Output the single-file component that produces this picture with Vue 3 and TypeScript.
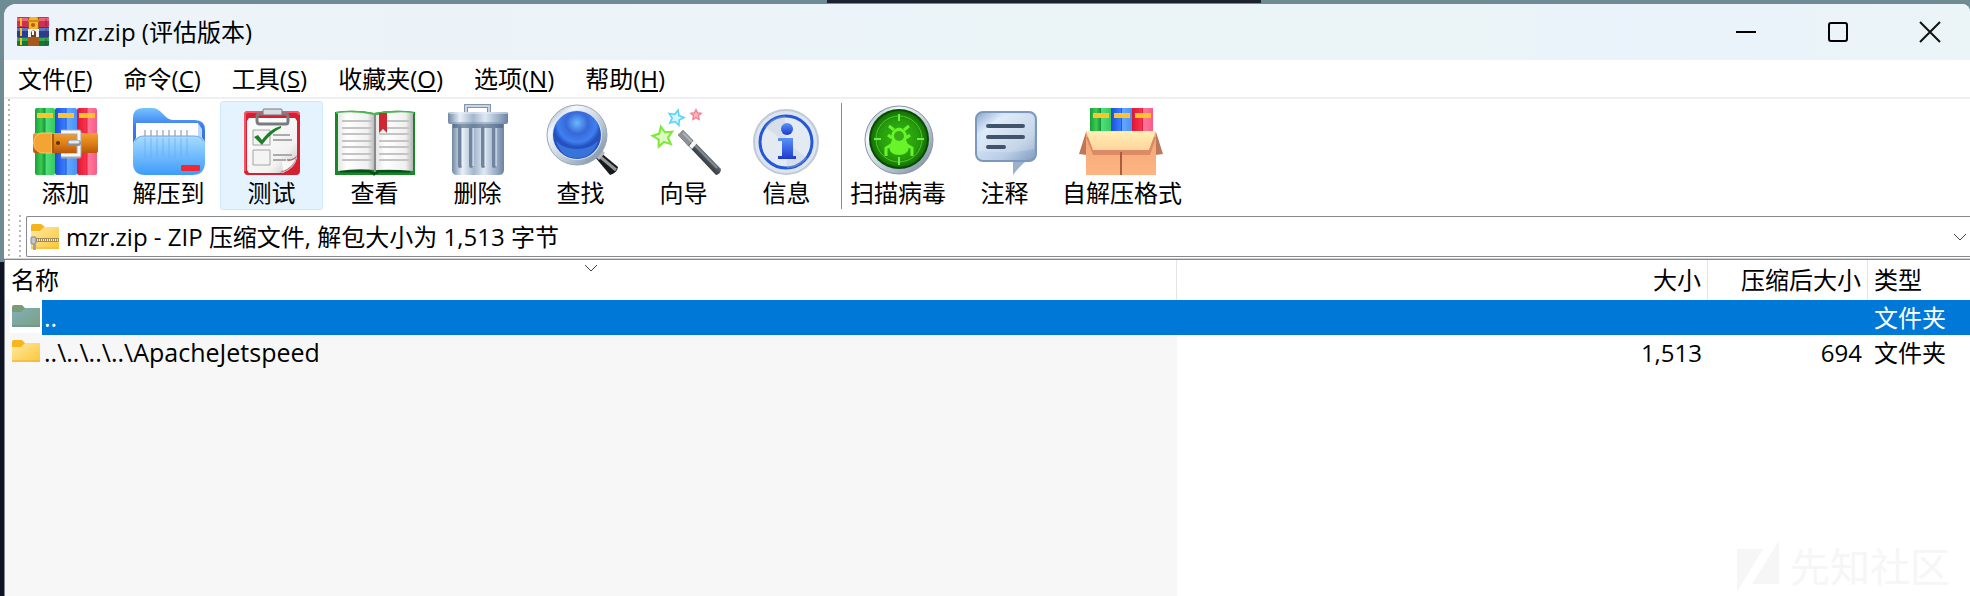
<script setup lang="ts">
import { ref } from 'vue'

interface MenuEntry { label: string; key: string }
interface Tool { id: string; label: string; group: 'main' | 'extra' }
interface Entry { name: string; size: string; packed: string; type: string }

const menus: MenuEntry[] = [
  { label: '文件', key: 'F' },
  { label: '命令', key: 'C' },
  { label: '工具', key: 'S' },
  { label: '收藏夹', key: 'O' },
  { label: '选项', key: 'N' },
  { label: '帮助', key: 'H' },
]

const tools: Tool[] = [
  { id: 'add', label: '添加', group: 'main' },
  { id: 'extract', label: '解压到', group: 'main' },
  { id: 'test', label: '测试', group: 'main' },
  { id: 'view', label: '查看', group: 'main' },
  { id: 'delete', label: '删除', group: 'main' },
  { id: 'find', label: '查找', group: 'main' },
  { id: 'wizard', label: '向导', group: 'main' },
  { id: 'info', label: '信息', group: 'main' },
  { id: 'scan', label: '扫描病毒', group: 'extra' },
  { id: 'comment', label: '注释', group: 'extra' },
  { id: 'sfx', label: '自解压格式', group: 'extra' },
]

const entries: Entry[] = [
  { name: '..', size: '', packed: '', type: '文件夹' },
  { name: '..\\..\\..\\..\\ApacheJetspeed', size: '1,513', packed: '694', type: '文件夹' },
]

const hovered = ref('test')
const selected = ref(0)

function star(cx: number, cy: number, r: number, turn: number): string {
  return Array.from({ length: 10 }, (_, i) => {
    const a = ((i * 36 + turn - 90) * Math.PI) / 180
    const d = i % 2 ? r * 0.48 : r
    return `${(cx + d * Math.cos(a)).toFixed(1)},${(cy + d * Math.sin(a)).toFixed(1)}`
  }).join(' ')
}
</script>

<template>
  <div class="desktop" lang="zh-CN">
    <div class="backdrop-top"></div>
    <svg class="defs" aria-hidden="true">
      <defs>
        <linearGradient id="gGreen"><stop offset="0" stop-color="#18a038" /><stop offset=".3" stop-color="#3ccb52" /><stop offset=".5" stop-color="#17963a" /><stop offset=".55" stop-color="#4fe07a" /><stop offset="1" stop-color="#38c860" /></linearGradient>
        <linearGradient id="gBlue"><stop offset="0" stop-color="#1a50d8" /><stop offset=".45" stop-color="#3a7cff" /><stop offset=".5" stop-color="#2058e0" /><stop offset=".55" stop-color="#62a8ff" /><stop offset="1" stop-color="#4a90f8" /></linearGradient>
        <linearGradient id="gRed"><stop offset="0" stop-color="#d81838" /><stop offset=".45" stop-color="#ff3048" /><stop offset=".5" stop-color="#e02040" /><stop offset=".55" stop-color="#ff7aa0" /><stop offset="1" stop-color="#f85c84" /></linearGradient>
        <linearGradient id="gBelt" x2="0" y2="1"><stop offset="0" stop-color="#f0a030" /><stop offset=".5" stop-color="#e08018" /><stop offset="1" stop-color="#b85808" /></linearGradient>
        <linearGradient id="gFolder" x2="0" y2="1"><stop offset="0" stop-color="#a8dcff" /><stop offset="1" stop-color="#3c9cfa" /></linearGradient>
        <linearGradient id="gBack" x2="0" y2="1"><stop offset="0" stop-color="#74c4ff" /><stop offset=".35" stop-color="#3b7cf0" /><stop offset="1" stop-color="#2c62e0" /></linearGradient>
        <linearGradient id="gPaper" x2="1" y2="1"><stop offset="0" stop-color="#fff" /><stop offset=".7" stop-color="#f2f2f2" /><stop offset="1" stop-color="#bcbcbc" /></linearGradient>
        <linearGradient id="gPageL"><stop offset="0" stop-color="#e6e6e6" /><stop offset=".25" stop-color="#fff" /><stop offset=".8" stop-color="#f0f0f0" /><stop offset="1" stop-color="#b4b4b4" /></linearGradient>
        <linearGradient id="gSteel"><stop offset="0" stop-color="#7088a4" /><stop offset=".2" stop-color="#e8f0f8" /><stop offset=".42" stop-color="#a4b6cc" /><stop offset=".62" stop-color="#dce8f4" /><stop offset="1" stop-color="#6c84a4" /></linearGradient>
        <linearGradient id="gRim" x2="1" y2="1"><stop offset="0" stop-color="#8094a8" /><stop offset=".25" stop-color="#f6faff" /><stop offset=".6" stop-color="#bcc8d6" /><stop offset="1" stop-color="#70849c" /></linearGradient>
        <radialGradient id="gLens" cy=".25"><stop offset="0" stop-color="#68b8ff" /><stop offset=".45" stop-color="#3868d8" /><stop offset=".8" stop-color="#3f80f0" /><stop offset="1" stop-color="#2450c0" /></radialGradient>
        <linearGradient id="gWand" x1="1" y2="1" x2="0"><stop offset=".35" stop-color="#7c8890" /><stop offset=".65" stop-color="#141a20" /></linearGradient>
        <linearGradient id="gInfo" x2="0" y2="1"><stop offset="0" stop-color="#5a94f8" /><stop offset="1" stop-color="#1c38d0" /></linearGradient>
        <radialGradient id="gRadar"><stop offset="0" stop-color="#36b818" /><stop offset=".7" stop-color="#279c0c" /><stop offset="1" stop-color="#147004" /></radialGradient>
        <linearGradient id="gBubble" x2="1" y2="1"><stop offset="0" stop-color="#88a4cc" /><stop offset=".25" stop-color="#d8e8f8" /><stop offset=".7" stop-color="#b8cce4" /><stop offset="1" stop-color="#7e9abc" /></linearGradient>
        <linearGradient id="gCard" x2="0" y2="1"><stop offset="0" stop-color="#f0a474" /><stop offset="1" stop-color="#ffb484" /></linearGradient>
        <linearGradient id="gFlap" x2="0" y2="1"><stop offset="0" stop-color="#fff0b4" /><stop offset="1" stop-color="#ffd49c" /></linearGradient>
        <linearGradient id="gYellow" x2="1" y2="1"><stop offset="0" stop-color="#ffe8a4" /><stop offset="1" stop-color="#fcc736" /></linearGradient>
        <linearGradient id="gTeal" x2="1" y2="1"><stop offset="0" stop-color="#80b0b8" /><stop offset="1" stop-color="#7ca084" /></linearGradient>
      </defs>
    </svg>

    <main class="window">
      <header class="titlebar">
        <svg class="app-icon" viewBox="0 0 32 30" aria-hidden="true">
          <rect width="32" height="10" rx="1" fill="#d03050" /><rect y="1" width="32" height="3" fill="#ee6480" />
          <rect y="10" width="32" height="10" fill="#283c90" /><rect y="11" width="32" height="3" fill="#5878c8" />
          <rect y="20" width="32" height="9" rx="1" fill="#107838" /><rect y="21" width="32" height="3" fill="#38a850" />
          <path d="M4 1v8M4 11v8M4 21v7" stroke="#f8c020" stroke-width="2" />
          <path d="M29 2v7M29 12v7M29 22v6" stroke="#702840" stroke-opacity=".4" stroke-width="2" />
          <rect x="11" width="11" height="29" fill="#a85818" /><rect x="12" width="9" height="13" rx="2" fill="#f4b434" />
          <rect x="11" y="3" width="11" height="2" fill="#d88818" /><circle cx="16" cy="8" r="2" fill="#b06010" />
          <path d="M11 12h11v8H11z" fill="#eee" /><path d="M14 20v-4a2 2 0 0 1 5 0v4z" fill="#704020" /><path d="M16 14v4" stroke="#fff" stroke-width="2" />
        </svg>
        <h1 class="title">mzr.zip (评估版本)</h1>
        <div class="caption-buttons">
          <button type="button" class="caption" aria-label="最小化"><svg viewBox="0 0 20 20"><path d="M0 10h20" stroke="#000" stroke-width="2" /></svg></button>
          <button type="button" class="caption" aria-label="最大化"><svg viewBox="0 0 20 20"><rect x="1" y="1" width="18" height="18" rx="2" fill="none" stroke="#000" stroke-width="2" /></svg></button>
          <button type="button" class="caption" aria-label="关闭"><svg viewBox="0 0 20 20"><path d="M0 0l20 20M20 0L0 20" stroke="#111" stroke-width="2" /></svg></button>
        </div>
      </header>

      <nav class="menubar">
        <button v-for="m in menus" :key="m.key" type="button" class="menu">{{ m.label }}(<span class="mnemonic">{{ m.key }}</span>)</button>
      </nav>

      <div class="rebar">
        <div class="grip"></div>
        <div class="bands">
          <div class="toolbar" role="toolbar">
            <button v-for="t in tools" :key="t.id" type="button" class="tool" :class="[t.group, t.id, { hot: hovered === t.id }]" @mouseenter="hovered = t.id">
              <svg class="tool-icon" viewBox="0 0 80 72" aria-hidden="true">
                <g v-if="t.id === 'add'">
                  <rect x="9" y="4" width="20" height="67" rx="2" fill="url(#gGreen)" /><rect x="29" y="4" width="22" height="67" rx="2" fill="url(#gBlue)" /><rect x="51" y="4" width="20" height="67" rx="2" fill="url(#gRed)" />
                  <path d="M11 9h16v5H11zM32 9h16v5H32zM53 9h16v5H53z" fill="#ffc42c" />
                  <rect x="7" y="29" width="65" height="20" rx="2" fill="url(#gBelt)" />
                  <path d="M26 29H16c-11 2-11 18 0 20h10z" fill="#f4a432" stroke="#ffc864" /><path d="M27 30v19" stroke="#a85c10" stroke-width="2" />
                  <circle cx="32" cy="39" r="2" fill="#5c3008" />
                  <path d="M35 28h18v24H35" fill="none" stroke="#a4a8ae" stroke-width="5" stroke-linejoin="round" /><path d="M35 28h18v23H35" fill="none" stroke="#f6f6f8" stroke-width="3" stroke-linejoin="round" />
                  <path d="M44 39h8" stroke="#8a9098" stroke-width="6" stroke-linecap="round" /><path d="M44 38h8" stroke="#e6e9ec" stroke-width="3" stroke-linecap="round" />
                </g>
                <g v-else-if="t.id === 'extract'">
                  <path d="M4 14Q4 4 14 4h10c8 0 12 12 20 12h22q10 0 10 10v30H4z" fill="url(#gBack)" />
                  <path d="M7 19h62l4 6v20H7z" fill="#c4d4f4" /><path d="M7 19h62v24H7z" fill="#fdfdff" />
                  <path d="M4 42q0-10 10-10h52q10 0 10 8v18q0 13-13 13H16Q4 71 4 59z" fill="url(#gFolder)" />
                  <path d="M16 26v7M22 26v7M28 26v7M34 26v7M40 26v7M46 26v7M52 26v7M58 26v7" stroke="#bcc4d0" stroke-width="2" />
                  <path d="M16 34v20M22 34v20M28 34v20M34 34v20M40 34v20M46 34v20M52 34v20M58 34v20" stroke="#64acf4" stroke-opacity=".35" stroke-width="2" />
                  <path d="M6 37q3-5 9-5h50q7 0 9 5" fill="none" stroke="#6ca8ee" /><rect x="52" y="61" width="19" height="6" rx="1" fill="#f02832" />
                </g>
                <g v-else-if="t.id === 'test'">
                  <rect x="12" y="7" width="56" height="64" rx="4" fill="#d81f32" /><path d="M13 67V11q0-3 3-3h48q3 0 3 3" fill="none" stroke="#f65464" stroke-width="2" />
                  <path d="M17 14h46l2 3v37q-2 10-14 15H17l-2-3V17z" fill="url(#gPaper)" /><path d="M65 51q-3 15-18 18c9-6 10-8 8-14q7 1 10-4" fill="#8c1820" fill-opacity=".55" /><path d="M51 67q-1-8-1-10 10 1 14-3-3 9-13 13" fill="#f8f8f8" />
                  <path d="M32 10h-5q-2 0-2 3v4q0 3 3 3h26q2 0 2-3v-4q0-3-2-3h-5" fill="none" stroke="#787c80" stroke-width="3" /><rect x="31" y="5" width="19" height="6" rx="1" fill="#d8dcdf" stroke="#74787c" />
                  <path d="M21 26h17v15H21zM21 46h17v15H21z" fill="#f4f4f4" stroke="#a4a4a4" /><path d="M41 31h17M41 36h19M41 51h19M41 56h13" stroke="#aaa" stroke-width="2" />
                  <path d="M22 33l4-2 4 5c5-7 11-12 19-14v2c-8 4-14 10-19 17z" fill="#1d8028" />
                </g>
                <g v-else-if="t.id === 'view'">
                  <path d="M0 8q20-3 39 1 21-4 41-1v63H42l-3-1-3 1H0z" fill="#168828" /><path d="M1 9q20-3 38 1 20-4 40-1" fill="none" stroke="#48b850" stroke-width="2" /><path d="M5 67h29l5 3 5-3h31" fill="none" stroke="#07501a" stroke-width="3" />
                  <path d="M3 9q19-2 37 2v55q-18-2-37 1z" fill="url(#gPageL)" /><path d="M41 11q18-4 37-2v58q-19-2-37-1z" fill="url(#gPageL)" /><path d="M40 11v57" stroke="#888" stroke-width="2" />
                  <path d="M7 17h30M7 24h30M7 30h30M7 37h30M7 43h30M7 50h30M7 56h30M44 17h30M44 24h30M44 30h30M44 37h30M44 43h30M44 50h30M44 56h30" stroke="#c4c4c4" stroke-width="2" />
                  <path d="M44 9h8v20l-4-4-4 4z" fill="#d02830" />
                </g>
                <g v-else-if="t.id === 'delete'">
                  <path d="M28 9V2h23v7" fill="none" stroke="#8294aa" stroke-width="4" /><path d="M28 9V2h23v7" fill="none" stroke="#c8d4e2" stroke-width="2" />
                  <path d="M14 20h52v46q0 5-5 5H19q-5 0-5-5z" fill="url(#gSteel)" /><path d="M15 20h50v4H15z" fill="#475e7c" fill-opacity=".6" />
                  <path d="M22 24v38M33 24v38M45 24v38M56 24v38" stroke="#7084a0" stroke-width="4" stroke-linecap="round" /><path d="M24 24v38M35 24v38M47 24v38M58 24v38" stroke="#f0f6fc" stroke-width="1" />
                  <rect x="10" y="8" width="60" height="12" rx="2" fill="url(#gSteel)" /><path d="M11 9h58" stroke="#e8f0f8" /><path d="M11 19h58" stroke="#7890ac" />
                </g>
                <g v-else-if="t.id === 'find'">
                  <path d="M54 53l5-5 18 15q-1 6-8 8z" fill="#18191b" /><path d="M57 51l18 15" stroke="#94989c" stroke-width="3" /><path d="M52 50l6-7 6 6-6 7z" fill="#b4b8bd" />
                  <circle cx="36" cy="31" r="30" fill="url(#gRim)" stroke="#98a6b6" /><circle cx="36" cy="31" r="25" fill="#dce6f0" /><circle cx="36" cy="31" r="24" fill="url(#gLens)" /><path d="M15 37q5 17 21 17t21-17q-8 8-21 8t-21-8" fill="#58a8ff" fill-opacity=".4" />
                </g>
                <g v-else-if="t.id === 'wizard'">
                  <polygon :points="star(19, 33, 13, -12)" fill="#80e83c" /><polygon :points="star(19, 33, 8, -12)" fill="#dcfac4" />
                  <polygon :points="star(32, 14, 10, 15)" fill="#5cd4f8" /><polygon :points="star(32, 14, 6, 15)" fill="#d4f4ff" />
                  <polygon :points="star(52, 11, 7, 0)" fill="#f48090" /><polygon :points="star(52, 11, 4, 0)" fill="#f8b4bc" />
                  <path d="M34 31l5-5 38 39q0 5-5 6z" fill="url(#gWand)" /><path d="M34 31l5-5 10 10-5 6z" fill="#8c9196" /><path d="M45 42l5-6 3 3-5 6z" fill="#f4f4f4" /><path d="M39 29l34 35" stroke="#fff" stroke-opacity=".3" stroke-width="2" />
                </g>
                <g v-else-if="t.id === 'info'">
                  <circle cx="39" cy="38" r="32" fill="#dce4ee" stroke="#c0cad6" stroke-width="2" /><circle cx="39" cy="38" r="26" fill="#e4eaf2" stroke="#2458d8" stroke-width="3" /><path d="M39 38L18 23q8-11 20-11zM39 38l21 16q-8 10-20 10z" fill="#bccad8" fill-opacity=".35" />
                  <circle cx="40" cy="25" r="6" fill="url(#gInfo)" /><path d="M31 34h15v18h3v3H31v-3h4V37h-4z" fill="url(#gInfo)" />
                </g>
                <g v-else-if="t.id === 'scan'">
                  <circle cx="41" cy="36" r="34" fill="url(#gRim)" stroke="#8894a2" /><circle cx="41" cy="35" r="30" fill="#084c04" /><circle cx="41" cy="35" r="28" fill="url(#gRadar)" /><circle cx="41" cy="35" r="23" fill="none" stroke="#4cc82c" />
                  <path d="M41 10v7M41 53v8M16 35h7M59 35h7" stroke="#70ec48" stroke-width="2" />
                  <path d="M35 27q6-7 12 0 3 4 1 9l3 7q-1 8-10 8t-10-8l3-7q-2-5 1-9" fill="#68f428" /><path d="M36 26l-5-4M46 26l5-4M34 34l-4-3M48 34l4-3M33 41l-5 3v8M49 41l5 3v8" fill="none" stroke="#68f428" stroke-width="3" /><circle cx="41" cy="32" r="5" fill="#38ac18" />
                </g>
                <g v-else-if="t.id === 'comment'">
                  <path d="M48 55h16q-9 6-16 16z" fill="#9cb2cc" /><rect x="11" y="8" width="60" height="49" rx="7" fill="url(#gBubble)" stroke="#7c98bc" stroke-width="2" /><path d="M13 47Q15 17 45 10h17q7 0 7 6v29q-23 5-56 2" fill="#fff" fill-opacity=".2" />
                  <path d="M23 22h35M23 33h35M23 43h16" stroke="#42536e" stroke-width="4" stroke-linecap="round" />
                </g>
                <g v-else>
                  <rect x="8" y="4" width="21" height="26" fill="url(#gGreen)" /><rect x="29" y="4" width="21" height="26" fill="url(#gBlue)" /><rect x="50" y="4" width="21" height="26" fill="url(#gRed)" /><path d="M11 9h16v5H11zM32 9h16v5H32zM53 9h16v5H53z" fill="#ffc42c" />
                  <path d="M4 28l-7 22 8 1M74 28l7 22-8 1" fill="#bc785a" /><path d="M4 27h70v44H4z" fill="url(#gCard)" /><path d="M4 33l7 18h57l6-18z" fill="#c87458" fill-opacity=".6" /><path d="M4 27h70l-7 19H11z" fill="url(#gFlap)" /><path d="M39 48v23" stroke="#a85c40" stroke-width="2" />
                </g>
              </svg>
              <span class="tool-label">{{ t.label }}</span>
            </button>
          </div>
          <div class="address-band">
            <div class="grip"></div>
            <div class="address">
              <svg class="address-icon" viewBox="0 0 30 28" aria-hidden="true">
                <path d="M1 3q0-2 2-2h8l4 3h14v7H1z" fill="#f4b41c" /><path d="M1 8h9l4-4h15v22H1z" fill="url(#gYellow)" /><path d="M1 25h28" stroke="#f0b838" /><path d="M5 17h24" stroke="#a08c58" stroke-width="4" /><path d="M5 17h24" stroke="#f0ece0" stroke-width="2" stroke-dasharray="1 1" /><rect x="1" y="14" width="5" height="7" rx="1" fill="#c4c6c8" stroke="#85888a" /><rect x="3" y="20" width="3" height="7" fill="#a0a4a8" />
              </svg>
              <select class="path" aria-label="地址">
                <option>mzr.zip - ZIP 压缩文件, 解包大小为 1,513 字节</option>
              </select>
              <svg class="chevron" viewBox="0 0 14 8" aria-hidden="true"><path d="M1 1l6 6 6-6" fill="none" stroke="#444" stroke-width="1" /></svg>
            </div>
          </div>
        </div>
      </div>

      <section class="list-pane">
        <table class="files">
          <colgroup><col class="c-name" /><col /><col class="c-packed" /><col class="c-type" /></colgroup>
          <thead>
            <tr>
              <th scope="col" class="sorted">名称<svg class="sort-mark" viewBox="0 0 14 8" aria-hidden="true"><path d="M1 1l6 6 6-6" fill="none" stroke="#444" stroke-width="1" /></svg></th>
              <th scope="col" class="num">大小</th>
              <th scope="col" class="num">压缩后大小</th>
              <th scope="col">类型</th>
            </tr>
          </thead>
          <tbody>
            <tr v-for="(e, i) in entries" :key="e.name" :class="{ selected: selected === i }" @click="selected = i">
              <td class="name">
                <div class="name-cell">
                  <span class="file-icon"><svg viewBox="0 0 28 22" aria-hidden="true"><path d="M0 2q0-2 2-2h8l3 3h15v6H0z" :fill="i === selected ? '#7c9a74' : '#f6b61c'" /><path d="M0 7h9l4-4h15v19H0z" :fill="i === selected ? 'url(#gTeal)' : 'url(#gYellow)'" /><path d="M0 21h28" :stroke="i === selected ? '#6c8c88' : '#e8b030'" /></svg></span>
                  <span class="file-name">{{ e.name }}</span>
                </div>
              </td>
              <td class="num">{{ e.size }}</td>
              <td class="num">{{ e.packed }}</td>
              <td>{{ e.type }}</td>
            </tr>
          </tbody>
        </table>
      </section>
    </main>

    <div class="watermark" aria-hidden="true">
      <svg viewBox="0 0 42 52"><path d="M0 8h26L0 51zM42 0v43H15z" fill="#f6f6f6" /></svg>
      <span>先知社区</span>
    </div>
  </div>
</template>

<style>
body { margin: 0; }
</style>

<style scoped>
.desktop {
  --name-col: 1172px;
  position: relative;
  display: flex;
  box-sizing: border-box;
  min-height: 100vh;
  padding: 4px 0 0 4px;
  overflow: hidden;
  background: linear-gradient(#6f8b93 262px, #0e1424 262px);
  color: #000;
  font-family: "Open Sans", "Noto Sans CJK SC", sans-serif;
  font-size: 24px;
}
.backdrop-top { position: absolute; top: 0; left: 42%; width: 22%; height: 3px; background: #1c2230; }
.defs { position: absolute; width: 0; height: 0; }
button { margin: 0; padding: 0; border: 0; background: none; color: inherit; font: inherit; }
.window { position: relative; display: flex; flex: 1; flex-direction: column; min-width: 0; overflow: hidden; border-radius: 12px 8px 0 0; background: #fff; }
.titlebar { display: flex; align-items: center; height: 56px; padding-left: 13px; background: linear-gradient(90deg, #ecf3fa, #ebf4f8 45%, #ebf4f7 75%, #eaf3fb 82%, #ebf4f7); }
.app-icon { width: 32px; height: 30px; }
.title { flex: 1; margin: 0 0 0 5px; font-size: 24px; font-weight: 400; line-height: 32px; }
.caption-buttons { display: flex; margin-right: -6px; }
.caption { width: 92px; height: 56px; }
.caption svg { display: block; width: 20px; height: 20px; margin: auto; overflow: visible; }
.menubar { display: flex; gap: 31px; height: 37px; padding-left: 14px; border-bottom: 2px solid #efefef; }
.menu { line-height: 36px; }
.mnemonic { text-decoration: underline; text-decoration-thickness: 2px; text-underline-offset: 2px; }
.rebar { display: flex; height: 158px; padding: 0 0 1px 4px; border-bottom: 1px solid #d4d4d4; }
.grip { flex: none; width: 2px; background: repeating-linear-gradient(#b8b8b8 0 2px, #fff 2px 5px); }
.bands { display: flex; flex: 1; flex-direction: column; min-width: 0; }
.toolbar { display: flex; height: 116px; padding: 2px 0 0 4px; box-sizing: border-box; }
.tool { box-sizing: border-box; display: flex; flex: none; flex-direction: column; align-items: center; width: 103px; height: 109px; padding-top: 2px; border: 1px solid transparent; border-radius: 3px; }
.tool.hot { border-color: #cce8ff; background: #e5f3ff; }
.tool.scan { position: relative; width: 110px; margin-left: 5px; }
.tool.scan::before { content: ""; position: absolute; top: 1px; bottom: 0; left: -3px; width: 1px; background: #8c8c8c; }
.tool.sfx { width: 132px; }
.tool-icon { display: block; width: 80px; height: 72px; overflow: visible; }
.tool-label { line-height: 34px; white-space: nowrap; }
.address-band { display: flex; flex: 1; padding-left: 9px; }
.address { display: flex; flex: 1; align-items: center; height: 39px; margin: 1px 0 0 5px; padding: 0 3px 0 3px; border: 1px solid #868a8e; border-right: 0; border-radius: 2px 0 0 2px; }
.address-icon { width: 30px; height: 28px; }
.path { flex: 1; height: 36px; margin: 0; padding: 0 0 0 6px; border: 0; outline: 0; appearance: none; background: transparent; color: #000; font: inherit; }
.chevron { width: 14px; height: 8px; }
.list-pane { flex: 1; border-top: 1px solid #828790; border-left: 1px solid #828790; background: linear-gradient(90deg, #f7f7f7 var(--name-col), #fff var(--name-col)); }
.files { width: 100%; border-collapse: separate; border-spacing: 0; table-layout: fixed; }
.c-name { width: var(--name-col); }
.c-packed { width: 160px; }
.c-type { width: 102px; }
th, td { box-sizing: border-box; padding: 0 6px; font-weight: 400; text-align: left; white-space: nowrap; }
th { position: relative; height: 40px; border-right: 1px solid #e5e5e5; background: #fff; line-height: 40px; }
th:last-child { border-right: 0; }
.sort-mark { position: absolute; top: 4px; left: 50%; width: 14px; height: 8px; margin-left: -7px; }
td { height: 35px; line-height: 35px; }
.num { text-align: right; }
.name { padding: 0; }
.name-cell { display: flex; height: 35px; padding-left: 5px; }
.file-icon { flex: none; width: 32px; }
.file-icon svg { display: block; width: 28px; height: 22px; margin: 5px 0 0 2px; }
.file-name { flex: 1; padding-left: 2px; font-size: 25px; }
.selected td { background: #0078d7; color: #fff; }
.selected .name { background: #f7f7f7; }
.selected .file-icon { height: 33px; background: #fff; }
.selected .file-name { background: #0078d7; }
.watermark { position: absolute; right: 20px; bottom: 3px; display: flex; gap: 11px; color: #f6f6f6; font-size: 40px; line-height: 52px; pointer-events: none; }
.watermark svg { width: 42px; height: 52px; }
</style>
